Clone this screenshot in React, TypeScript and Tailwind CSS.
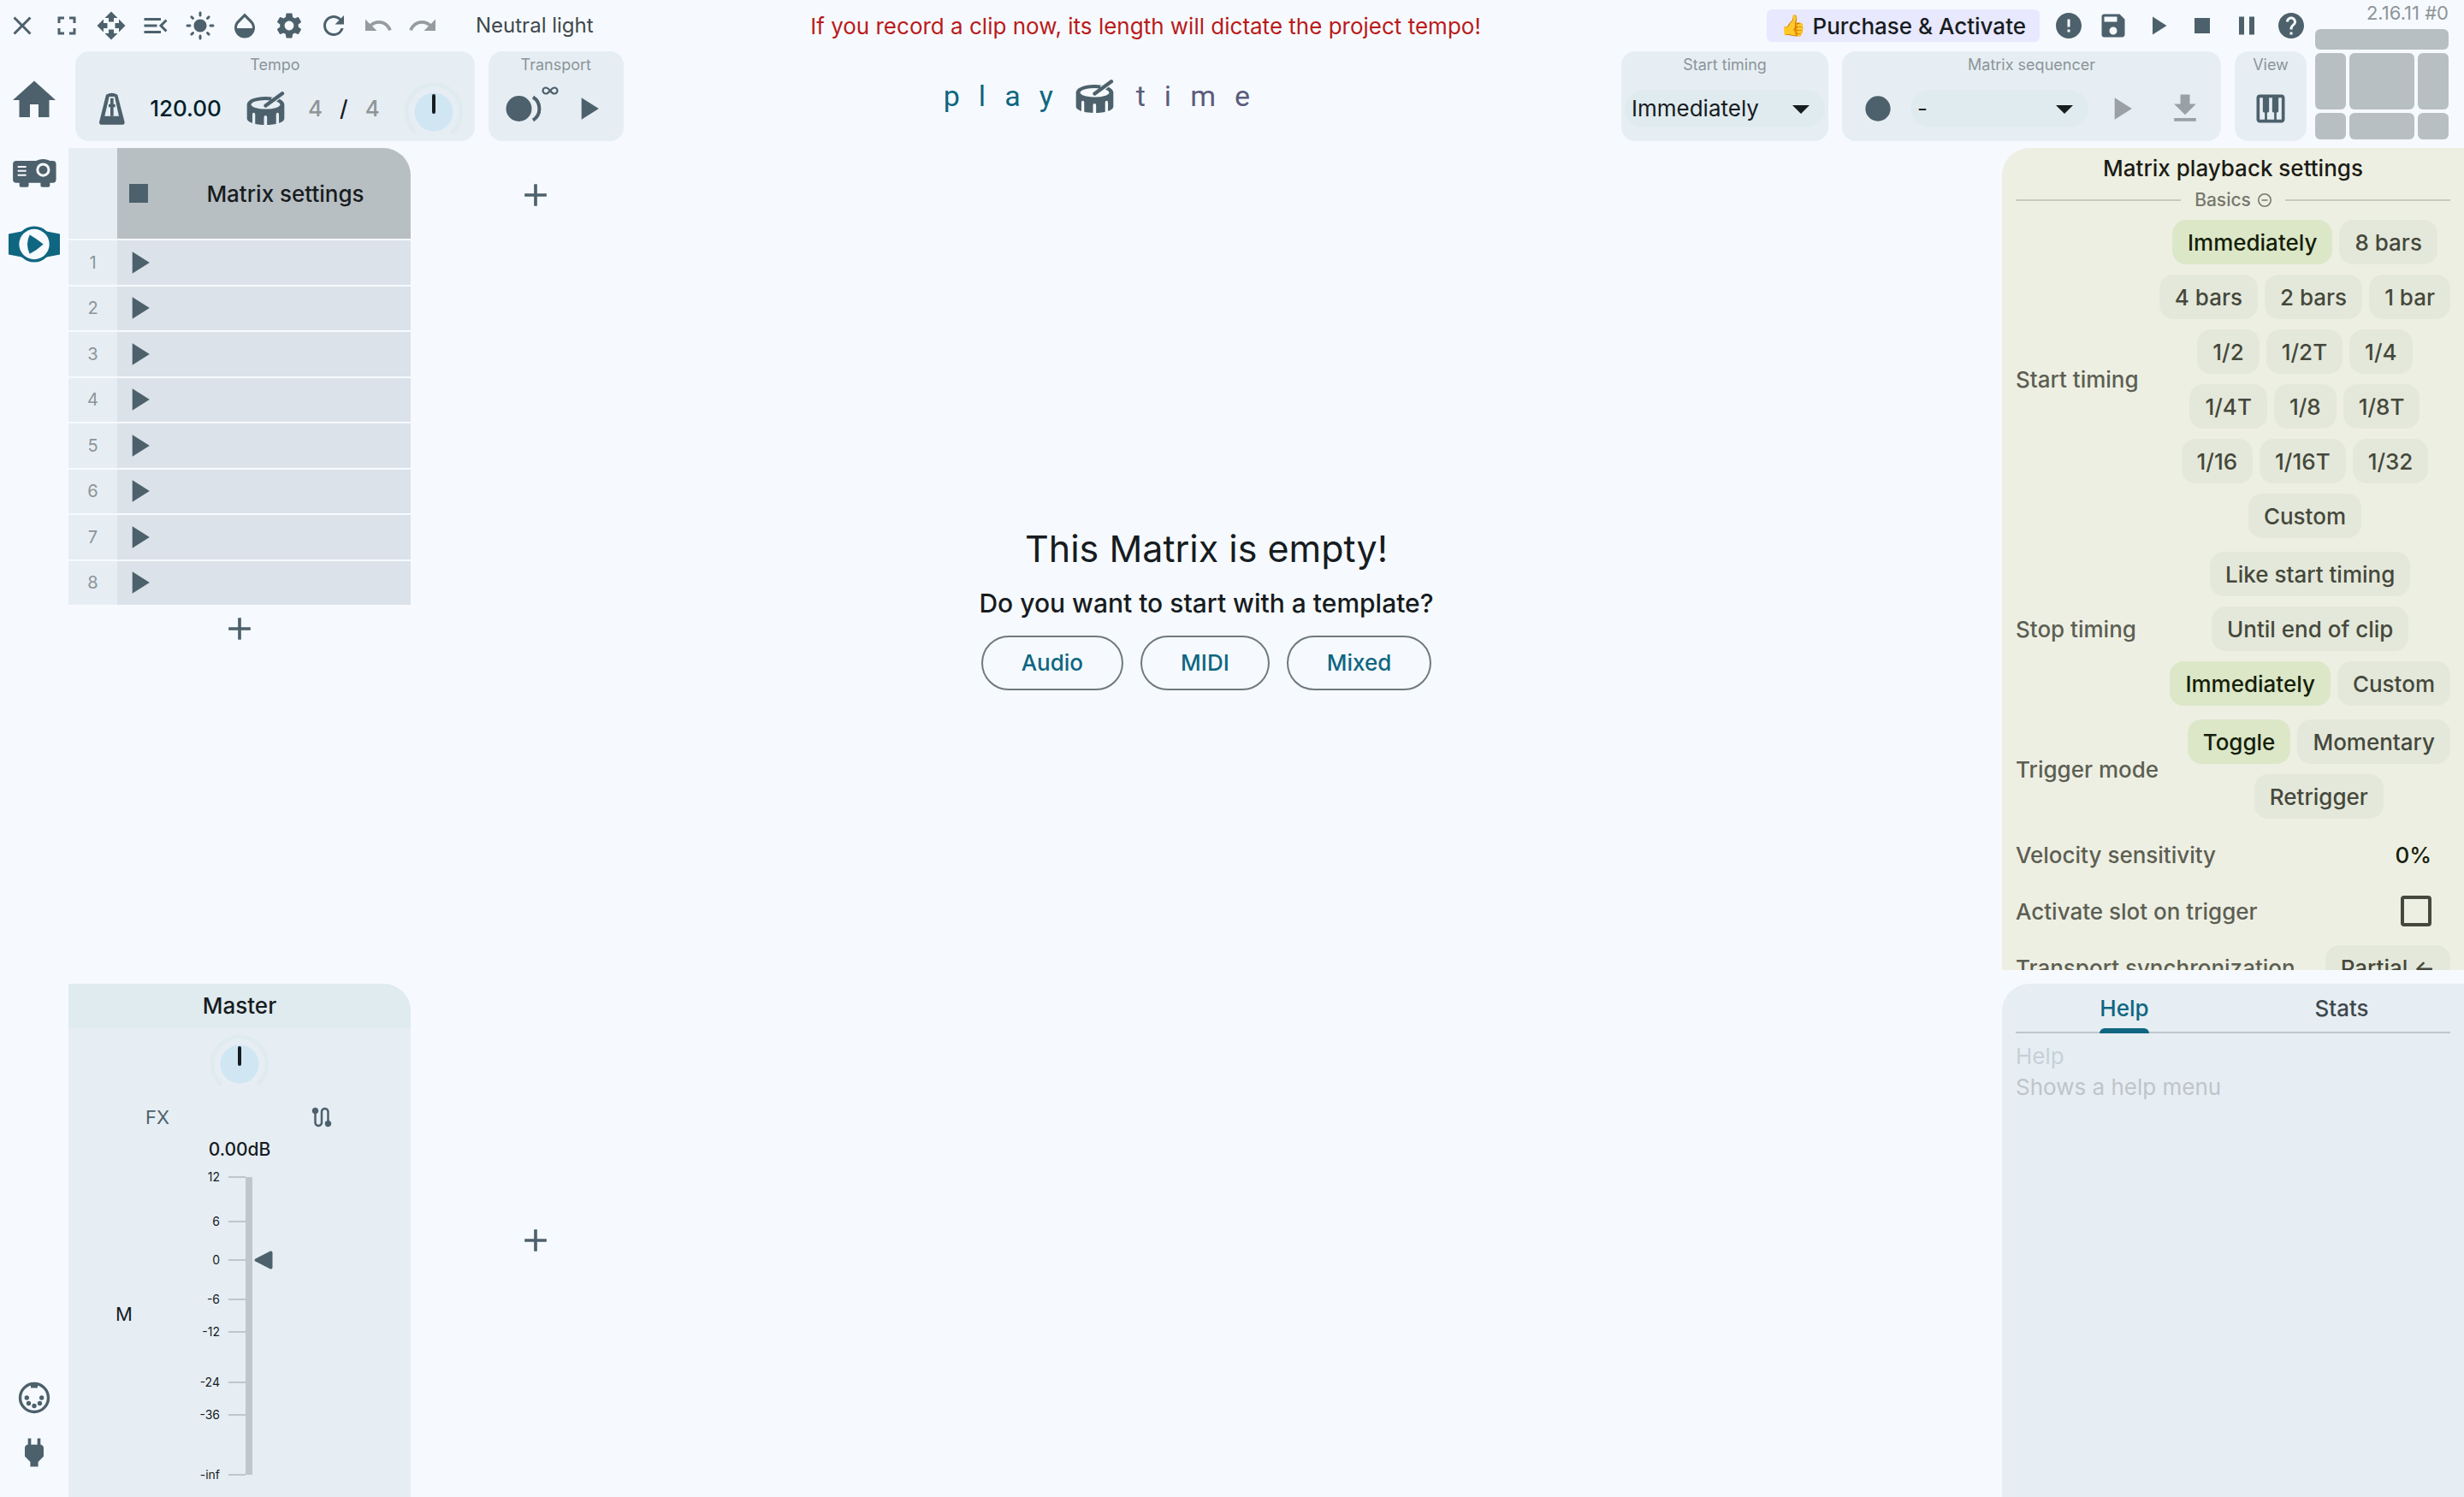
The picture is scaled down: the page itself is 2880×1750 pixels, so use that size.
import type { ReactNode } from "react";
import type { IconType } from "react-icons";
import {
  MdAdd,
  MdArrowDropDown,
  MdClose,
  MdError,
  MdFiberManualRecord,
  MdFileDownload,
  MdFullscreen,
  MdHelp,
  MdHome,
  MdLightMode,
  MdMenuOpen,
  MdOpacity,
  MdOpenWith,
  MdPause,
  MdPiano,
  MdPlayArrow,
  MdPower,
  MdRedo,
  MdRefresh,
  MdRoute,
  MdSave,
  MdSettings,
  MdStop,
  MdUndo,
} from "react-icons/md";

type Tool = { label: string; icon: IconType; muted?: boolean };

const leftTools: Tool[] = [
  { label: "Close", icon: MdClose },
  { label: "Full screen", icon: MdFullscreen },
  { label: "Move", icon: MdOpenWith },
  { label: "Menu", icon: MdMenuOpen },
  { label: "Brightness", icon: MdLightMode },
  { label: "Contrast", icon: MdOpacity },
  { label: "Settings", icon: MdSettings },
  { label: "Refresh", icon: MdRefresh },
  { label: "Undo", icon: MdUndo, muted: true },
  { label: "Redo", icon: MdRedo, muted: true },
];

const rightTools: Tool[] = [
  { label: "Notifications", icon: MdError },
  { label: "Save", icon: MdSave },
  { label: "Play project", icon: MdPlayArrow },
  { label: "Stop project", icon: MdStop },
  { label: "Pause project", icon: MdPause },
  { label: "Help menu", icon: MdHelp },
];

const startRows = [
  ["Immediately", "8 bars"],
  ["4 bars", "2 bars", "1 bar"],
  ["1/2", "1/2T", "1/4"],
  ["1/4T", "1/8", "1/8T"],
  ["1/16", "1/16T", "1/32"],
  ["Custom"],
];
const stopRows = [["Like start timing"], ["Until end of clip"], ["Immediately", "Custom"]];
const triggerRows = [["Toggle", "Momentary"], ["Retrigger"]];

const faderMarks = [
  { label: "12", at: 0 },
  { label: "6", at: 15 },
  { label: "0", at: 28 },
  { label: "-6", at: 41 },
  { label: "-12", at: 52 },
  { label: "-24", at: 69 },
  { label: "-36", at: 80 },
  { label: "-inf", at: 100 },
];

function ToolButton({ tool }: { tool: Tool }) {
  const Icon = tool.icon;
  return (
    <button
      type="button"
      aria-label={tool.label}
      className={`flex h-full w-[52px] items-center justify-center ${tool.muted ? "text-[#969b9d]" : "text-[#4d616c]"}`}
    >
      <Icon className="size-9" />
    </button>
  );
}

function Drum({ hollow }: { hollow: string }) {
  return (
    <svg viewBox="562 44 136 124" className="h-[41px] w-[45px] shrink-0" aria-hidden="true">
      <path d="M564 93C564 76 594 65 630 65S696 76 696 93V142C696 156 664 165 630 165S564 156 564 142Z" fill="#4d616c" />
      <ellipse cx="630" cy="93" rx="51" ry="16" fill={hollow} />
      <path d="M583 168V128Q583 122 588 122T593 128V168ZM624 168V138Q624 132 629.500 132T635 138V168ZM667 168V128Q667 122 672 122T677 128V168Z" fill={hollow} />
      <path d="M655 79L672 66" stroke={hollow} strokeWidth="20" />
      <path d="M630 97L689 54" stroke="#4d616c" strokeWidth="13" strokeLinecap="round" />
    </svg>
  );
}

function Metronome() {
  return (
    <svg viewBox="44 52 90 114" className="h-[38px] w-[30px]" aria-hidden="true">
      <path d="M68 60Q88 48 108 60L133 156Q133 165 126 165H51Q44 165 44 156Z" fill="#4d616c" />
      <path d="M79 67H98L113 135H63Z" fill="#e6eef4" />
      <path d="M83 72H94V135H83ZM77 93H100V104H77Z" fill="#4d616c" />
    </svg>
  );
}

function Knob() {
  return (
    <svg viewBox="0 0 72 64" className="h-16 w-[72px]" aria-hidden="true">
      <path d="M15 60A32 32 0 1 1 57 60" fill="none" stroke="#e0ebef" strokeWidth="5" />
      <circle cx="36" cy="36" r="22.500" fill="#d0e6f3" />
      <path d="M36 17V36" stroke="#171c1f" strokeWidth="4" strokeLinecap="round" />
    </svg>
  );
}

function RecordOverdub() {
  return (
    <svg viewBox="0 0 64 56" className="h-14 w-16" fill="none" aria-hidden="true">
      <circle cx="16.500" cy="28" r="15" fill="#4d616c" />
      <path d="M33 14.500A16 16 0 0 1 33 41.500" stroke="#4d616c" strokeWidth="4" />
      <path
        d="M53 7C51 4.500 49.500 3.500 48 3.500A3.500 3.500 0 0 0 48 10.500C49.500 10.500 51 9.500 53 7S56.500 3.500 58 3.500A3.500 3.500 0 0 1 58 10.500C56.500 10.500 55 9.500 53 7Z"
        stroke="#4d616c"
        strokeWidth="2.200"
      />
    </svg>
  );
}

function Projector() {
  return (
    <svg viewBox="43 48 154 100" className="h-[33px] w-[51px]" aria-hidden="true">
      <path d="M55 54H125Q150 42 175 54H184Q196 54 196 66V120Q196 132 184 132H174V142Q174 147 168 147H147Q141 147 141 142V132H99V142Q99 147 93 147H72Q66 147 66 142V132H55Q43 132 43 120V66Q43 54 55 54Z" fill="#4d616c" />
      <circle cx="150" cy="86" r="20" fill="none" stroke="#f6fafe" strokeWidth="9" />
      <path d="M60 75H90M60 90H90M60 105H90" stroke="#f6fafe" strokeWidth="6" />
    </svg>
  );
}

function PlayWatch() {
  return (
    <svg viewBox="30 284 180 128" className="h-[43px] w-[60px]" aria-hidden="true">
      <path d="M30 312L80 302V394L30 384ZM210 312L160 302V394L210 384Z" fill="#0f6681" />
      <circle cx="120" cy="348" r="63" fill="#0f6681" />
      <circle cx="120" cy="348" r="53" fill="#f6fafe" />
      <path d="M104 315Q128 328 152 348Q128 370 104 382Q88 349 104 315Z" fill="#0f6681" />
    </svg>
  );
}

function MidiPort() {
  return (
    <svg viewBox="-20 -20 40 40" className="size-10" fill="#4d616c" aria-hidden="true">
      <circle r="16.500" fill="none" stroke="#4d616c" strokeWidth="3.400" />
      <path d="M-4 -16H4V-11.500H-4Z" />
      <circle cx="-8.700" r="2.700" />
      <circle cx="8.700" r="2.700" />
      <circle cx="-6.500" cy="6.500" r="2.700" />
      <circle cx="6.500" cy="6.500" r="2.700" />
      <circle cy="9.500" r="2.700" />
    </svg>
  );
}

function Panel({ title, className, children }: { title: string; className: string; children: ReactNode }) {
  return (
    <section className="flex h-full flex-col rounded-2xl bg-[#e6eef4] pt-1">
      <h2 className="text-center text-lg leading-6 text-[#8b9597]">{title}</h2>
      <div className={`flex flex-1 items-center ${className}`}>{children}</div>
    </section>
  );
}

function Dropdown({ label, options, className }: { label: string; options: string[]; className: string }) {
  return (
    <div className={`relative ${className}`}>
      <select
        aria-label={label}
        className="h-11 w-full appearance-none rounded-3xl bg-[#e0ebef] pr-12 pl-2 text-[26px] text-[#171c1f]"
      >
        {options.map((o) => (
          <option key={o}>{o}</option>
        ))}
      </select>
      <MdArrowDropDown className="pointer-events-none absolute -top-0.5 right-1 size-12 text-[#171c1f]" />
    </div>
  );
}

function IconButton({ label, className, children }: { label: string; className?: string; children: ReactNode }) {
  return (
    <button type="button" aria-label={label} className={`flex items-center justify-center text-[#4d616c] ${className ?? ""}`}>
      {children}
    </button>
  );
}

function Chip({ text, active }: { text: string; active: boolean }) {
  return (
    <button
      type="button"
      aria-pressed={active}
      className={`h-[52px] rounded-2xl px-[18px] text-[26px] font-medium ${active ? "bg-[#dce7c8] text-[#151e0a]" : "bg-[#e4e8da] text-[#45483c]"}`}
    >
      {text}
    </button>
  );
}

function ChoiceGroup({ label, rows, active }: { label: string; rows: string[][]; active: string }) {
  return (
    <div role="group" aria-label={label} className="flex items-center justify-between">
      <span className="text-[26px] font-medium text-[#5c5f53]">{label}</span>
      <div className="flex flex-col items-center gap-3">
        {rows.map((row) => (
          <div key={row[0]} className="flex gap-2">
            {row.map((t) => (
              <Chip key={t} text={t} active={t === active} />
            ))}
          </div>
        ))}
      </div>
    </div>
  );
}

function Header() {
  return (
    <header className="flex pb-2">
      <div className="min-w-0 flex-1">
        <div className="flex h-[60px] items-center">
          <div className="flex h-full">
            {leftTools.map((t) => (
              <ToolButton key={t.label} tool={t} />
            ))}
          </div>
          <button type="button" className="ml-9 text-2xl text-[#40484c]">
            Neutral light
          </button>
          <p className="flex-1 pr-20 text-center text-[26px] text-[#ba1a1a]">
            If you record a clip now, its length will dictate the project tempo!
          </p>
          <button
            type="button"
            className="mr-2 flex h-[38px] items-center gap-2 rounded-md bg-[#e8e8fe] px-4 text-[26px] font-medium text-[#171c1f]"
          >
            <span className="text-2xl">👍</span>
            Purchase &amp; Activate
          </button>
          <div className="flex h-full">
            {rightTools.map((t) => (
              <ToolButton key={t.label} tool={t} />
            ))}
          </div>
        </div>

        <div className="flex h-[105px] items-center gap-4 pr-2">
          <div className="flex h-full">
            <IconButton label="Home" className="mr-2 w-20 pt-2">
              <MdHome className="size-[60px]" />
            </IconButton>
            <Panel title="Tempo" className="gap-[27px] pr-3 pl-7">
              <IconButton label="Metronome">
                <Metronome />
              </IconButton>
              <input
                aria-label="Tempo"
                defaultValue="120.00"
                className="w-[88px] bg-transparent text-center text-[26px] font-medium text-[#001f2a]"
              />
              <IconButton label="Tap tempo">
                <Drum hollow="#e6eef4" />
              </IconButton>
              <div className="flex gap-5 text-[26px] font-medium text-[#8f9597]">
                <button type="button" aria-label="Beats per bar">
                  4
                </button>
                <span className="text-[#171c1f]">/</span>
                <button type="button" aria-label="Beat unit">
                  4
                </button>
              </div>
              <IconButton label="Tempo range">
                <Knob />
              </IconButton>
            </Panel>
          </div>
          <Panel title="Transport" className="gap-[11px] pr-5 pl-[19px]">
            <IconButton label="Record">
              <RecordOverdub />
            </IconButton>
            <IconButton label="Play">
              <MdPlayArrow className="size-11" />
            </IconButton>
          </Panel>
          <h1 className="flex flex-1 items-center justify-center gap-[22px] pr-[60px] font-['Roboto'] text-[34px] text-[#0f6681]">
            <span>p</span>
            <span>l</span>
            <span>a</span>
            <span>y</span>
            <span className="mx-1">
              <Drum hollow="#f6fafe" />
            </span>
            <span className="text-[#5c5b7d]">t</span>
            <span className="text-[#5c5b7d]">i</span>
            <span className="text-[#5c5b7d]">m</span>
            <span className="text-[#5c5b7d]">e</span>
          </h1>
          <Panel title="Start timing" className="px-1">
            <Dropdown label="Start timing" options={["Immediately", "8 bars", "4 bars"]} className="w-[234px]" />
          </Panel>
          <Panel title="Matrix sequencer" className="gap-4 px-5">
            <IconButton label="Record sequence">
              <MdFiberManualRecord className="size-11" />
            </IconButton>
            <Dropdown label="Sequence" options={["-"]} className="w-[208px]" />
            <IconButton label="Play sequence">
              <MdPlayArrow className="size-11 text-[#9aa1a4]" />
            </IconButton>
            <IconButton label="Export sequence" className="ml-[15px]">
              <MdFileDownload className="size-11 text-[#9aa1a4]" />
            </IconButton>
          </Panel>
          <Panel title="View" className="px-5">
            <IconButton label="Piano view">
              <MdPiano className="size-11" />
            </IconButton>
          </Panel>
        </div>
      </div>

      <div className="pr-[18px] pl-0.5">
        <p className="h-[34px] text-right text-[22px] leading-[30px] text-[#8f9597]">2.16.11 #0</p>
        <div className="grid grid-cols-[36px_76px_36px] grid-rows-[24px_66px_31px] gap-1">
          <button type="button" aria-label="Toggle top bar" className="col-span-3 rounded-md bg-[#b8bfc2]" />
          {["left", "center", "right", "bottom left", "bottom center", "bottom right"].map((n) => (
            <button key={n} type="button" aria-label={`Toggle ${n} area`} className="rounded-md bg-[#b8bfc2]" />
          ))}
        </div>
      </div>
    </header>
  );
}

function Matrix() {
  return (
    <section className="text-[#171c1f]">
      <div className="flex h-[106px]">
        <div className="w-[57px] bg-[#e6eef4]" />
        <div className="flex flex-1 items-center rounded-tr-[32px] bg-[#b8bfc2]">
          <IconButton label="Stop all" className="w-[50px]">
            <MdStop className="size-11" />
          </IconButton>
          <button type="button" className="h-full flex-1 text-[26px] font-medium">
            Matrix settings
          </button>
        </div>
      </div>
      <ol className="mt-0.5 flex h-[426px] flex-col gap-0.5">
        {[1, 2, 3, 4, 5, 6, 7, 8].map((n) => (
          <li key={n} className="flex flex-1">
            <span className="flex w-[57px] items-center justify-center bg-[#e6eef4] text-xl text-[#8b9597]">{n}</span>
            <div className="flex flex-1 bg-[#dbe2e9]">
              <IconButton label={`Play row ${n}`} className="w-[50px]">
                <MdPlayArrow className="size-11" />
              </IconButton>
            </div>
          </li>
        ))}
      </ol>
      <IconButton label="Add row" className="h-14 w-full">
        <MdAdd className="size-11" />
      </IconButton>
    </section>
  );
}

function MasterStrip() {
  return (
    <section className="flex flex-col items-center rounded-tr-[32px] bg-[#e6eef4] text-[#171c1f]">
      <h2 className="w-full rounded-tr-[32px] bg-[#e0ebef] text-center text-[26px] leading-[52px] font-medium">Master</h2>
      <IconButton label="Pan" className="mt-1.5">
        <Knob />
      </IconButton>
      <div className="mt-3 flex h-11 w-full px-2">
        <button type="button" className="flex-1 text-[22px] text-[#4d616c]">
          FX
        </button>
        <IconButton label="Routing" className="flex-1">
          <MdRoute className="size-[30px]" />
        </IconButton>
      </div>
      <p className="mt-0.5 text-[21px] leading-7 font-medium">0.00dB</p>
      <div className="mt-[18px] mb-[26px] flex w-full flex-1">
        <div className="flex w-[130px] items-center justify-center pb-7">
          <button type="button" aria-label="Mute" className="text-[22px]">
            M
          </button>
        </div>
        <div className="relative w-[77px]">
          {faderMarks.map((m) => (
            <div
              key={m.label}
              className="absolute right-0 flex -translate-y-1/2 items-center gap-[10px] text-sm"
              style={{ top: `${m.at}%` }}
            >
              {m.label}
              <span className="h-0.5 w-5 bg-[#bfc7ce]" />
            </div>
          ))}
        </div>
        <div className="relative w-8">
          <div className="h-full w-2 bg-[#bfc7ce]" />
          <svg viewBox="0 0 22 22" className="absolute top-[28%] right-0 size-[22px] -translate-y-1/2" aria-hidden="true">
            <path d="M1.500 9.500L19 .600Q21.500 0 21.500 2.500V19.500Q21.500 22 19 21.400L1.500 12.500Q-.500 11 1.500 9.500Z" fill="#4d616c" />
          </svg>
          <input
            type="range"
            aria-label="Master volume"
            min={-60}
            max={12}
            defaultValue={0}
            className="absolute inset-0 size-full opacity-0 [writing-mode:vertical-lr]"
          />
        </div>
      </div>
    </section>
  );
}

function EmptyMessage() {
  return (
    <div className="flex flex-1 flex-col items-center justify-center pt-28 pr-[292px] text-[#171c1f]">
      <div>
        <h2 className="text-center text-[43px] leading-[56px]">This Matrix is empty!</h2>
        <p className="mt-4 text-center text-3xl leading-10 font-medium">Do you want to start with a template?</p>
        <div className="mt-[18px] flex justify-center gap-5">
          {["Audio", "MIDI", "Mixed"].map((t) => (
            <button
              key={t}
              type="button"
              className="h-16 rounded-full border-2 border-[#6f797e] px-[45px] text-[26px] font-medium text-[#0f6681]"
            >
              {t}
            </button>
          ))}
        </div>
      </div>
    </div>
  );
}

function PlaybackSettings() {
  return (
    <section className="min-h-0 overflow-hidden rounded-tl-[32px] bg-[#eeefe3] px-4">
      <h2 className="pt-1 text-center text-[26px] leading-10 font-medium text-[#1b1c15]">Matrix playback settings</h2>
      <div className="flex h-[34px] items-center gap-4">
        <span className="h-0.5 flex-1 bg-[#c8cabc]" />
        <button type="button" className="flex items-center gap-2 text-[21px] leading-8 font-medium text-[#76786c]">
          Basics
          <svg viewBox="0 0 16 16" className="size-4" fill="none" stroke="#76786c" strokeWidth="1.600" aria-hidden="true">
            <circle cx="8" cy="8" r="7.200" />
            <path d="M4.500 8H11.500" />
          </svg>
        </button>
        <span className="h-0.5 flex-1 bg-[#c8cabc]" />
      </div>
      <div className="mt-1.5 flex flex-col gap-4 text-[26px] font-medium text-[#5c5f53]">
        <ChoiceGroup label="Start timing" rows={startRows} active="Immediately" />
        <ChoiceGroup label="Stop timing" rows={stopRows} active="Immediately" />
        <ChoiceGroup label="Trigger mode" rows={triggerRows} active="Toggle" />
        <div className="flex h-[52px] items-center justify-between">
          Velocity sensitivity
          <button type="button" aria-label="Velocity sensitivity" className="mr-[22px] text-[#151e0a]">
            0%
          </button>
        </div>
        <label className="flex h-12 items-center justify-between">
          Activate slot on trigger
          <input type="checkbox" className="mr-[22px] size-9 appearance-none rounded border-4 border-[#45483c]" />
        </label>
        <div className="flex items-center justify-between">
          Transport synchronization
          <Chip text="Partial ←" active={false} />
        </div>
      </div>
    </section>
  );
}

function HelpPanel() {
  return (
    <section className="rounded-tl-[32px] bg-[#e6eef4] px-4 text-[26px]">
      <div role="tablist" className="flex h-[58px] border-b-2 border-[#bfc7ce] font-medium">
        <div className="flex flex-1 justify-center">
          <button type="button" role="tab" aria-selected="true" className="relative -mb-0.5 pb-0.5 text-[#0f6681]">
            Help
            <span className="absolute inset-x-0 bottom-0 h-1.5 rounded-t-md bg-[#0f6681]" />
          </button>
        </div>
        <div className="flex flex-1 justify-center">
          <button type="button" role="tab" aria-selected="false" className="text-[#40484c]">
            Stats
          </button>
        </div>
      </div>
      <div className="pt-[9px] leading-9 text-[#c8d0d7]">
        <h3>Help</h3>
        <p className="text-[#bec5c9]">Shows a help menu</p>
      </div>
    </section>
  );
}

export default function App() {
  return (
    <div className="flex h-screen flex-col overflow-hidden bg-[#f6fafe] font-['Inter',sans-serif]">
      <Header />
      <main className="grid min-h-0 flex-1 grid-cols-[80px_400px_1fr_540px] grid-rows-[minmax(0,1fr)_600px] gap-y-4">
        <nav className="row-span-2 flex flex-col pb-[22px]">
          <IconButton label="Projector" className="h-[58px]">
            <Projector />
          </IconButton>
          <IconButton label="Playtime" className="mt-6 h-[60px]">
            <PlayWatch />
          </IconButton>
          <IconButton label="MIDI" className="mt-auto h-[60px]">
            <MidiPort />
          </IconButton>
          <IconButton label="Power" className="mt-1 h-[60px]">
            <MdPower className="size-11" />
          </IconButton>
        </nav>
        <Matrix />
        <div className="flex">
          <IconButton label="Add column" className="h-[110px] w-[292px]">
            <MdAdd className="size-11" />
          </IconButton>
          <EmptyMessage />
        </div>
        <PlaybackSettings />
        <MasterStrip />
        <IconButton label="Add track" className="w-[292px]">
          <MdAdd className="size-11" />
        </IconButton>
        <HelpPanel />
      </main>
    </div>
  );
}
